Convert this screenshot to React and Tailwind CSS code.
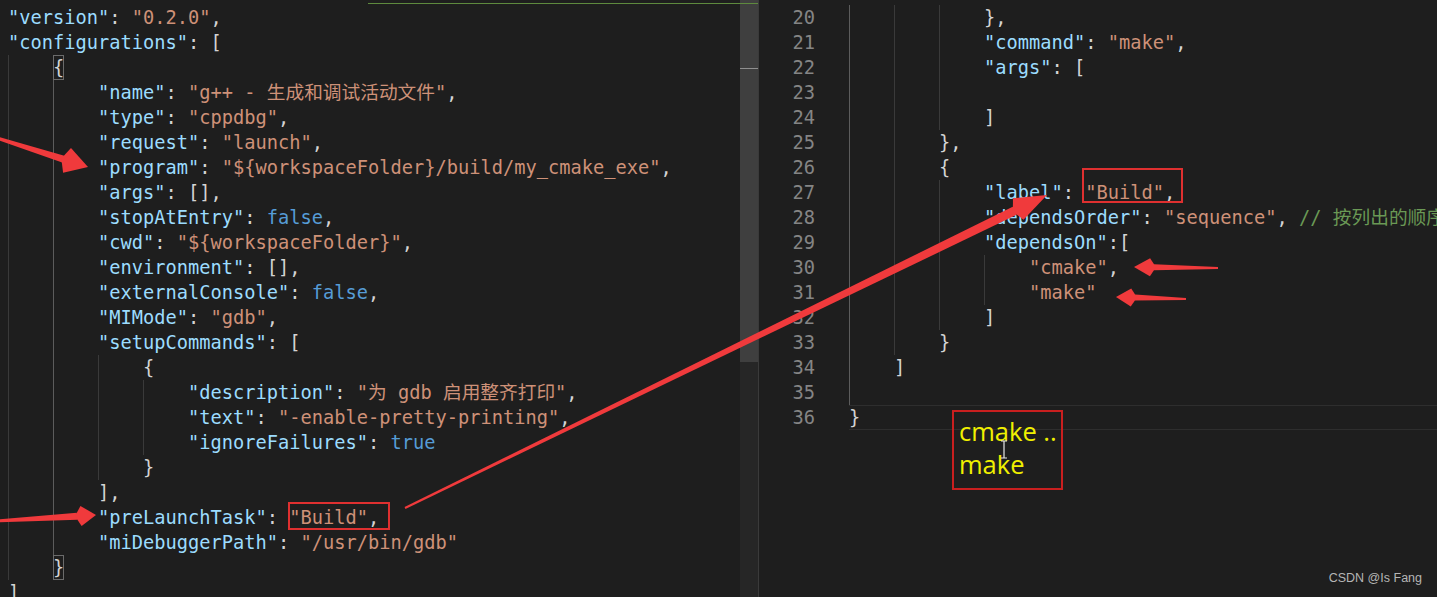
import React from 'react';

// left pane: [indent, text, bracketBox?]
const leftLines = [
  [0, '"version": "0.2.0",'],
  [0, '"configurations": ['],
  [1, '{', true],
  [2, '"name": "g++ - 生成和调试活动文件",'],
  [2, '"type": "cppdbg",'],
  [2, '"request": "launch",'],
  [2, '"program": "${workspaceFolder}/build/my_cmake_exe",'],
  [2, '"args": [],'],
  [2, '"stopAtEntry": false,'],
  [2, '"cwd": "${workspaceFolder}",'],
  [2, '"environment": [],'],
  [2, '"externalConsole": false,'],
  [2, '"MIMode": "gdb",'],
  [2, '"setupCommands": ['],
  [3, '{'],
  [4, '"description": "为 gdb 启用整齐打印",'],
  [4, '"text": "-enable-pretty-printing",'],
  [4, '"ignoreFailures": true'],
  [3, '}'],
  [2, '],'],
  [2, '"preLaunchTask": "Build",'],
  [2, '"miDebuggerPath": "/usr/bin/gdb"'],
  [1, '}', true],
  [0, ']'],
];

// right pane: [line number, indent, text]
const rightLines = [
  [20, 3, '},'],
  [21, 3, '"command": "make",'],
  [22, 3, '"args": ['],
  [23, 3, ''],
  [24, 3, ']'],
  [25, 2, '},'],
  [26, 2, '{'],
  [27, 3, '"label": "Build",'],
  [28, 3, '"dependsOrder": "sequence", // 按列出的顺序执行'],
  [29, 3, '"dependsOn":['],
  [30, 4, '"cmake",'],
  [31, 4, '"make"'],
  [32, 3, ']'],
  [33, 2, '}'],
  [34, 1, ']'],
  [35, 1, ''],
  [36, 0, '}'],
];

const colors = {
  k: 'text-[#9cdcfe]',
  s: 'text-[#ce9178]',
  b: 'text-[#569cd6]',
  c: 'text-[#6a9955]',
  p: 'text-[#d4d4d4]',
};

function tokenize(text) {
  const parts = text.match(/"[^"]*"|\/\/.*$|true|false|[^"\/tf]+|./g) || [];
  let rest = text;
  return parts.map((part) => {
    rest = rest.slice(part.length);
    let type = 'p';
    if (part.startsWith('"')) type = /^\s*:/.test(rest) ? 'k' : 's';
    else if (part.startsWith('//')) type = 'c';
    else if (part === 'true' || part === 'false') type = 'b';
    return [type, part];
  });
}

function Code({ text, box }) {
  if (box) {
    return (
      <span className="inline-block h-[25px] text-[#d4d4d4] ring-1 ring-inset ring-[#6b6b6b]">
        {text}
      </span>
    );
  }
  return tokenize(text).map(([type, part], i) => (
    <span key={i} className={colors[type]}>
      {part}
    </span>
  ));
}

function Guides({ count, active }) {
  return Array.from({ length: count }).map((_, i) => (
    <span
      key={i}
      className={`h-full w-[4ch] shrink-0 border-l ${
        i === active ? 'border-[#5c5c5c]' : 'border-[#3a3a3a]'
      }`}
    />
  ));
}

// tapered shaft + triangle head, computed from the two end points
function Arrow({ from, to, w1, w2, head, hw }) {
  const [x1, y1] = from;
  const [x2, y2] = to;
  const len = Math.hypot(x2 - x1, y2 - y1);
  const dx = (x2 - x1) / len;
  const dy = (y2 - y1) / len;
  const nx = -dy;
  const ny = dx;
  const bx = x2 - dx * head;
  const by = y2 - dy * head;
  const shaft = [
    [x1 + nx * w1, y1 + ny * w1],
    [bx + nx * w2, by + ny * w2],
    [bx - nx * w2, by - ny * w2],
    [x1 - nx * w1, y1 - ny * w1],
  ];
  const tip = [
    [x2, y2],
    [bx + dx * 4 + nx * hw, by + dy * 4 + ny * hw],
    [bx - dx * 2, by - dy * 2],
    [bx + dx * 4 - nx * hw, by + dy * 4 - ny * hw],
  ];
  const pts = (a) => a.map((p) => p.join(',')).join(' ');
  return (
    <g fill="#f03a3c">
      <polygon points={pts(shaft)} />
      <polygon points={pts(tip)} />
    </g>
  );
}

export default function App() {
  return (
    <div className="relative flex h-[597px] w-[1437px] overflow-hidden bg-[#1e1e1e] font-['DejaVu_Sans_Mono','Noto_Sans_CJK_SC',monospace] text-[18.7px] leading-[25px]">
      {/* left editor */}
      <div className="w-[740px] shrink-0 overflow-hidden pl-[8px] pt-[4.5px]">
        {leftLines.map(([indent, text, box], i) => (
          <div key={i} className="flex h-[25px] whitespace-pre">
            <Guides count={indent} active={1} />
            <span>
              <Code text={text} box={box} />
            </span>
          </div>
        ))}
      </div>

      {/* scrollbar */}
      <div className="flex w-[18px] shrink-0 flex-col bg-[#262626]">
        <div className="relative h-[362px] bg-[#3f3f3f]">
          <div className="mt-[68px] h-px bg-[#8f8f8f]" />
        </div>
      </div>
      <div className="w-px shrink-0 bg-[#3a3a3a]" />

      {/* right editor */}
      <div className="flex-1 overflow-hidden pt-[4.5px]">
        {rightLines.map(([num, indent, text]) => (
          <div key={num} className="flex h-[25px] whitespace-pre">
            <span className="w-[56px] shrink-0 text-right text-[#858585]">{num}</span>
            <span className="w-[34px] shrink-0" />
            <div
              className={`flex flex-1 ${
                num === 36 ? 'border-y border-[#2e2e2e] leading-[23px]' : ''
              }`}
            >
              <Guides count={indent} active={0} />
              <span>
                <Code text={text} />
              </span>
            </div>
          </div>
        ))}
      </div>

      {/* decorations over the editors */}
      <div className="absolute left-[368px] top-[3px] h-px w-[390px] bg-[#5e8a3e]" />

      <div className="absolute left-[288px] top-[502px] h-[28px] w-[102px] border-2 border-[#df3030]" />
      <div className="absolute left-[1082px] top-[168px] h-[35px] w-[101px] border-2 border-[#df3030]" />

      <div className="absolute left-[952px] top-[410px] h-[80px] w-[111px] border-2 border-[#c91f1f] pl-[5px] pt-[3px] font-['Open_Sans',sans-serif] text-[25.5px] leading-[33px] text-[#f0f000]">
        <div>cmake ..</div>
        <div>make</div>
      </div>

      <svg className="pointer-events-none absolute left-0 top-0" width="1437" height="597">
        <Arrow from={[-6, 137]} to={[88, 167]} w1={1.5} w2={3.5} head={26} hw={13} />
        <Arrow from={[-4, 521]} to={[96, 515]} w1={1.5} w2={3.5} head={19} hw={10} />
        <Arrow from={[405, 508]} to={[1047, 195]} w1={1} w2={4.5} head={36} hw={12} />
        <Arrow from={[1218, 268]} to={[1134, 267]} w1={1} w2={3} head={20} hw={9} />
        <Arrow from={[1186, 299]} to={[1116, 297]} w1={1} w2={3} head={19} hw={9} />
        {/* mouse I-beam */}
        <g stroke="#e8e8e8" strokeWidth="1.2" fill="none">
          <path d="M1001 441h6M1004 441v17M1001 458h6" />
        </g>
      </svg>

      <div className="absolute bottom-[11px] right-[15px] font-['Liberation_Sans',sans-serif] text-[12.5px] leading-[16px] text-[#b5b5b5]">
        CSDN @Is Fang
      </div>
    </div>
  );
}
